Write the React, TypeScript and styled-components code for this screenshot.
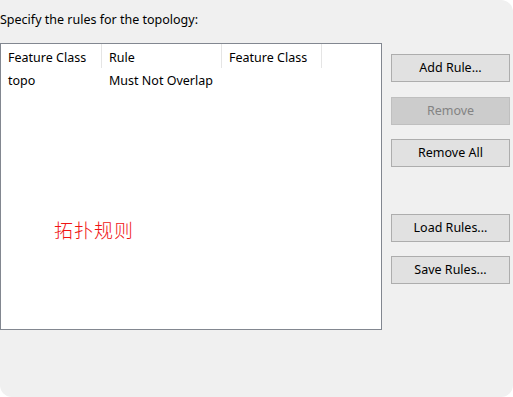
import React from "react";
import styled, { createGlobalStyle } from "styled-components";

const Global = createGlobalStyle`
  html, body { margin: 0; padding: 0; background: #ffffff; }
  body { font-family: "Noto Sans", "Segoe UI", sans-serif; font-size: 12.5px; color: #000; }
`;

const Window = styled.div`
  width: 513px;
  height: 397px;
  background: #f0f0f0;
  border-radius: 0 12px 12px 12px;
  box-sizing: border-box;
  display: flex;
  flex-direction: column;
`;

const Title = styled.div`
  height: 43px;
  box-sizing: border-box;
  padding: 11px 0 0 0;
  line-height: 18px;
  font-size: 12.5px;
`;

const Body = styled.div`
  display: flex;
  gap: 9px;
`;

const List = styled.div`
  position: relative;
  width: 382px;
  height: 287px;
  box-sizing: border-box;
  background: #ffffff;
  border: 1px solid #828790;
`;

const Header = styled.div`
  display: flex;
  height: 25px;
`;

const HeaderCell = styled.div<{ $w: number }>`
  width: ${(p) => p.$w}px;
  box-sizing: border-box;
  padding: 4px 0 0 7px;
  line-height: 20px;
  border-right: 1px solid #e5e5e5;
  height: 24px;
`;

const Row = styled.div`
  display: flex;
  height: 22px;
`;

const Cell = styled.div<{ $w: number }>`
  width: ${(p) => p.$w}px;
  box-sizing: border-box;
  padding: 2px 0 0 7px;
  line-height: 20px;
`;

const Overlay = styled.div`
  position: absolute;
  left: 53px;
  top: 174px;
  color: #f01414;
  font-family: "Noto Sans CJK SC", sans-serif;
  font-weight: 300;
  font-size: 19px;
  letter-spacing: 1px;
  line-height: 24px;
`;

const Buttons = styled.div`
  display: flex;
  flex-direction: column;
  padding-top: 11px;
`;

const Button = styled.button<{ $gap?: number }>`
  width: 119px;
  height: 28px;
  margin-top: ${(p) => p.$gap ?? 0}px;
  box-sizing: border-box;
  background: #e1e1e1;
  border: 1px solid #adadad;
  font-family: "Noto Sans", "Segoe UI", sans-serif;
  font-size: 12.5px;
  color: #000;
  padding: 0;
  line-height: 18px;
  &:disabled {
    background: #cccccc;
    border-color: #bfbfbf;
    color: #838383;
  }
`;

const cols = [101, 120, 100];

export default function App() {
  return (
    <>
      <Global />
      <Window>
        <Title>Specify the rules for the topology:</Title>
        <Body>
          <List>
            <Header>
              <HeaderCell $w={cols[0]}>Feature Class</HeaderCell>
              <HeaderCell $w={cols[1]}>Rule</HeaderCell>
              <HeaderCell $w={cols[2]}>Feature Class</HeaderCell>
            </Header>
            <Row>
              <Cell $w={cols[0]}>topo</Cell>
              <Cell $w={cols[1]}>Must Not Overlap</Cell>
              <Cell $w={cols[2]}></Cell>
            </Row>
            <Overlay>拓扑规则</Overlay>
          </List>
          <Buttons>
            <Button>Add Rule...</Button>
            <Button $gap={15} disabled>Remove</Button>
            <Button $gap={14}>Remove All</Button>
            <Button $gap={47}>Load Rules...</Button>
            <Button $gap={14}>Save Rules...</Button>
          </Buttons>
        </Body>
      </Window>
    </>
  );
}
